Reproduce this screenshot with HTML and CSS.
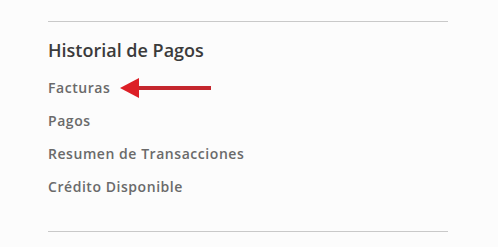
FILE: index.html
```html
<!DOCTYPE html>
<html lang="es"><head><meta charset="utf-8"><link rel="stylesheet" href="styles.css"></head>
<body>
<section class="panel">
  <h2 class="title">Historial de Pagos</h2>
  <ul class="links">
    <li class="item"><a class="link" href="#">Facturas</a>
      <svg class="arrow" width="92" height="22" viewBox="0 0 92 22" aria-hidden="true">
        <line x1="16" y1="10" x2="91" y2="10" stroke="#c4262d" stroke-width="4"/>
        <polygon points="0,10 19,0 19,20" fill="#dc1f26"/>
      </svg>
    </li>
    <li class="item"><a class="link" href="#">Pagos</a></li>
    <li class="item"><a class="link" href="#">Resumen de Transacciones</a></li>
    <li class="item"><a class="link" href="#">Crédito Disponible</a></li>
  </ul>
</section>
</body></html>
```
FILE: styles.css
```css
html, body { margin: 0; padding: 0; }
body {
  background: #fcfcfc;
  font-family: "Open Sans", "Noto Sans", sans-serif;
  width: 498px;
  height: 247px;
  overflow: hidden;
}
.panel {
  margin: 21px 0 0 48px;
  width: 400px;
  border-top: 1px solid #c9c9c9;
  border-bottom: 1px solid #c9c9c9;
  padding: 16px 0 28px;
}
.title {
  margin: 0;
  font-size: 18px;
  line-height: 24px;
  font-weight: 600;
  color: #3b3b3b;
}
.links {
  list-style: none;
  margin: 9px 0 0;
  padding: 0;
}
.item {
  position: relative;
  line-height: 33px;
  font-size: 14px;
}
.link {
  color: #6a6a6a;
  font-weight: 600;
  text-decoration: none;
  letter-spacing: 0.55px;
}
.arrow {
  position: absolute;
  left: 72px;
  top: 7px;
}
```
